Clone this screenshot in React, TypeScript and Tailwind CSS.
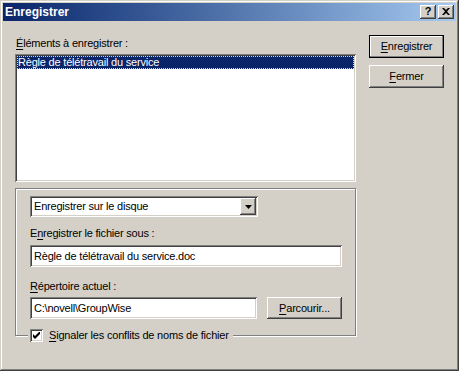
import React from "react";

const raised =
  "shadow-[inset_-1px_-1px_#404040,inset_1px_1px_#ffffff,inset_-2px_-2px_#808080]";
const sunken =
  "shadow-[inset_1px_1px_#808080,inset_-1px_-1px_#ffffff,inset_2px_2px_#404040,inset_-2px_-2px_#d4d0c8]";

const Btn: React.FC<{ label: string; mn: string; def?: boolean; className?: string }> = ({
  label,
  mn,
  def,
  className = "",
}) => {
  const rest = label.slice(mn.length);
  return (
    <div
      className={`flex items-center justify-center bg-[#d4d0c8] text-black ${
        def
          ? "shadow-[inset_0_0_0_1px_#000000,inset_-2px_-2px_#808080,inset_2px_2px_#ffffff]"
          : raised
      } ${className}`}
    >
      <span>
        <span className="underline underline-offset-[2px]">{mn}</span>
        {rest}
      </span>
    </div>
  );
};

export default function App() {
  return (
    <div className="font-['Liberation_Sans',Arial,sans-serif] text-[11px] leading-[13px] tracking-[-0.2px] text-black">
      <div className="w-[459px] h-[371px] bg-[#d4d0c8] p-[3px] flex flex-col shadow-[inset_-1px_-1px_#404040,inset_1px_1px_#d4d0c8,inset_-2px_-2px_#808080,inset_2px_2px_#ffffff]">
        {/* barre de titre */}
        <div className="h-[18px] flex items-center bg-gradient-to-r from-[#0a246a] to-[#a6caf0] pl-[2px] pr-[2px]">
          <span className="text-white font-bold text-[12px] tracking-normal flex-1">Enregistrer</span>
          <div className="flex gap-[2px]">
            <div className={`w-[16px] h-[14px] bg-[#d4d0c8] flex items-center justify-center ${raised}`}>
              <span className="font-bold text-[11px] leading-[11px] -mt-[1px]">?</span>
            </div>
            <div className={`w-[16px] h-[14px] bg-[#d4d0c8] flex items-center justify-center ${raised}`}>
              <svg width="8" height="7" viewBox="0 0 8 7" className="-mt-[1px]">
                <path d="M0 0h2l2 2 2-2h2L5 3.5 8 7H6L4 5 2 7H0l3-3.5z" fill="#000" />
              </svg>
            </div>
          </div>
        </div>

        <div className="flex pl-[12px] pt-[14px]">
          <div className="w-[341px] flex flex-col">
            <div className="mt-[2px] h-[13px] pl-[1px]">
              <span className="underline underline-offset-[2px]">É</span>léments à enregistrer :
            </div>

            {/* liste */}
            <div className={`mt-[4px] h-[128px] bg-white p-[2px] ${sunken}`}>
              <div className="h-[13px] bg-[#0a246a] text-white border border-dotted border-[#e8dc8a] flex items-center">
                Règle de télétravail du service
              </div>
            </div>

            {/* groupe */}
            <div className="mt-[6px] border border-[#808080] shadow-[1px_1px_0_#ffffff,inset_1px_1px_0_#ffffff] pt-[7px] pl-[14px] pb-[16px] flex flex-col">
              <div className={`w-[228px] h-[21px] bg-white p-[2px] flex ${sunken}`}>
                <div className="flex-1 flex items-center pl-[2px]">Enregistrer sur le disque</div>
                <div className={`w-[16px] h-[17px] bg-[#d4d0c8] flex items-center justify-center ${raised}`}>
                  <svg width="7" height="4" viewBox="0 0 7 4">
                    <path d="M0 0h7L3.5 4z" fill="#000" />
                  </svg>
                </div>
              </div>

              <div className="mt-[10px] h-[13px]">
                E<span className="underline underline-offset-[2px]">n</span>registrer le fichier sous :
              </div>
              <div className={`mt-[5px] w-[312px] h-[22px] bg-white flex items-center pl-[4px] ${sunken}`}>
                Règle de télétravail du service.doc
              </div>

              <div className="mt-[13px] h-[13px]">
                <span className="underline underline-offset-[2px]">R</span>épertoire actuel :
              </div>
              <div className="mt-[4px] flex gap-[10px]">
                <div className={`w-[227px] h-[22px] bg-white flex items-center pl-[4px] ${sunken}`}>
                  C:\novell\GroupWise
                </div>
                <Btn label="Parcourir..." mn="P" className="w-[75px] h-[22px]" />
              </div>
            </div>

            {/* case à cocher sur le bord du groupe */}
            <div className="relative -mt-[7px] ml-[13px] self-start bg-[#d4d0c8] pl-[2px] pr-[4px] flex items-center gap-[6px] whitespace-nowrap">
              <div className={`w-[13px] h-[13px] bg-white flex items-center justify-center ${sunken}`}>
                <svg width="7" height="7" viewBox="0 0 7 7">
                  <path d="M0 2v3l2 2 5-5V-1L2 4z" fill="#000" />
                </svg>
              </div>
              <span>
                <span className="underline underline-offset-[2px]">S</span>ignaler les conflits de noms de fichier
              </span>
            </div>
          </div>

          <div className="ml-[13px] flex flex-col gap-[7px]">
            <Btn label="Enregistrer" mn="E" def className="w-[75px] h-[23px]" />
            <Btn label="Fermer" mn="F" className="w-[75px] h-[23px]" />
          </div>
        </div>
      </div>
    </div>
  );
}
